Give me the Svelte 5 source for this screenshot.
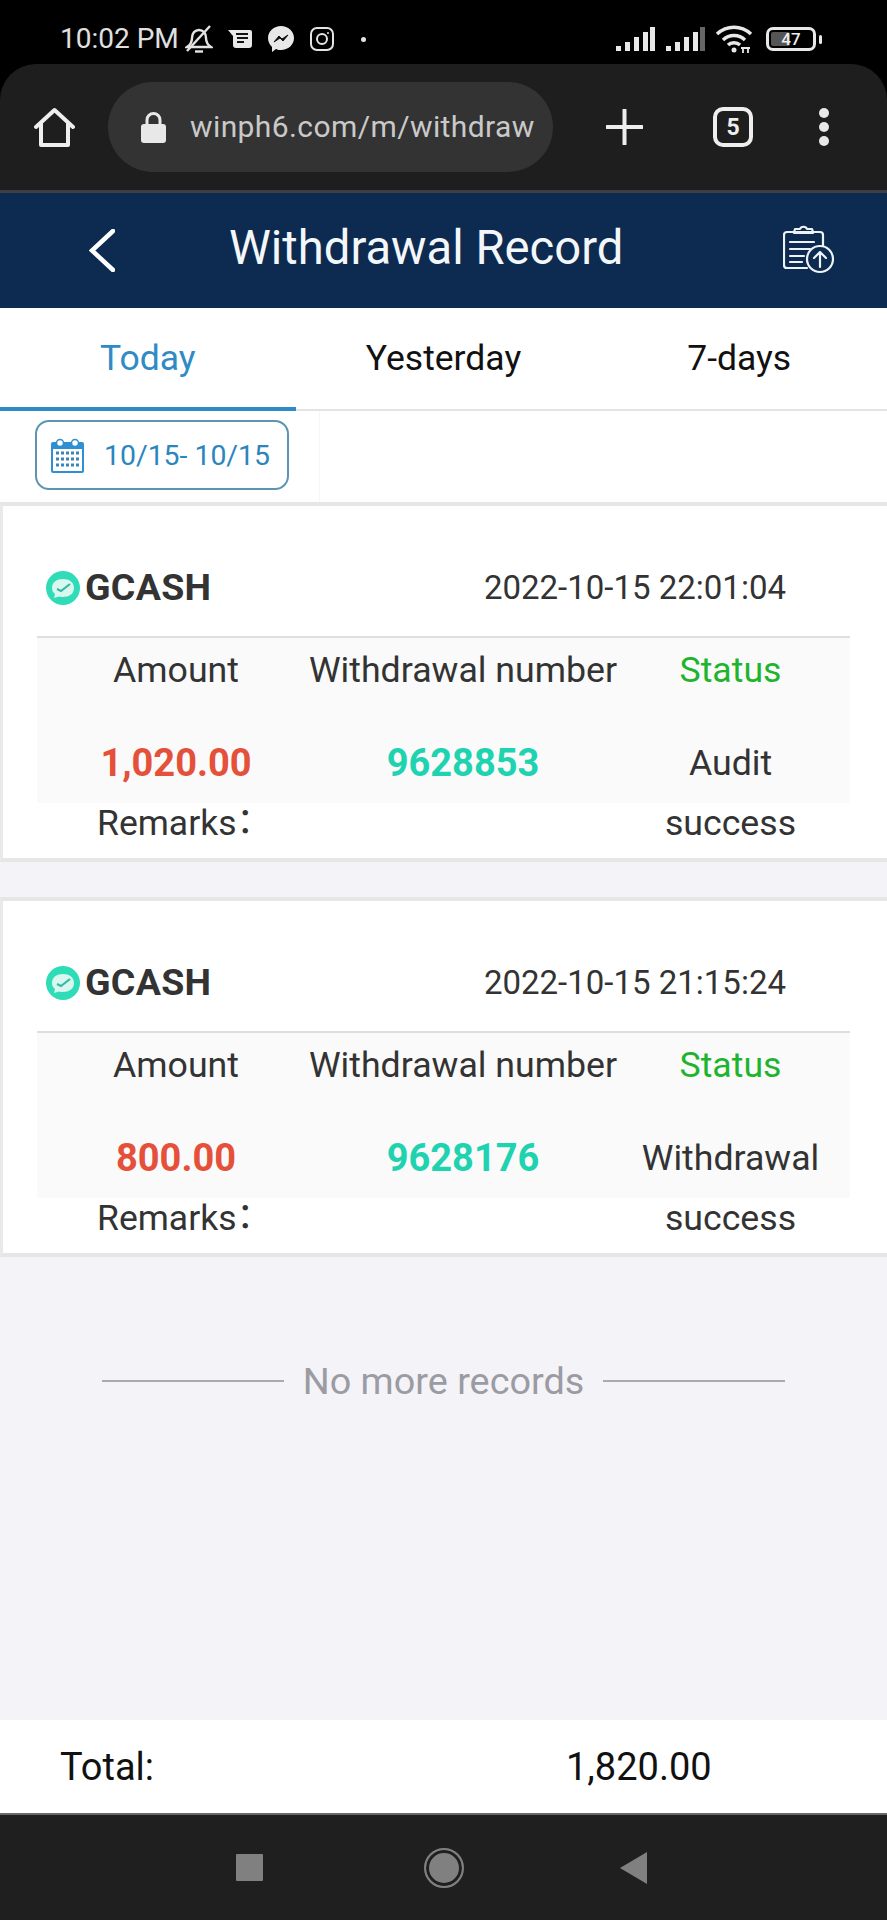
<script>
  const tabs = ['Today', 'Yesterday', '7-days'];
  let active = 0;

  const records = [
    { time: '2022-10-15 22:01:04', amount: '1,020.00', number: '9628853', status: ['Audit', 'success'] },
    { time: '2022-10-15 21:15:24', amount: '800.00', number: '9628176', status: ['Withdrawal', 'success'] }
  ];
</script>

<div class="page">
  <div class="statusbar">
    <span class="clock">10:02 PM</span>
    <svg class="i-bell" viewBox="0 0 28 28" fill="none" stroke="#e4e4e4" stroke-width="2.400">
      <path d="M2 22c3-2 5-4 5-9 0-5 3-8 7-8s7 3 7 8c0 5 2 7 5 9z" />
      <path d="M10 26.500h8" />
      <path d="M2 26L25 1" />
    </svg>
    <svg class="i-msg" viewBox="0 0 24 20">
      <path d="M0 1h22a2 2 0 0 1 2 2v13a3 3 0 0 1-3 3H8a3 3 0 0 1-3-3V7z" fill="#e8e8e8" />
      <path d="M8 5h12M9 9h11M9 13h7" stroke="#111" stroke-width="2" />
    </svg>
    <svg class="i-fb" viewBox="0 0 26 26">
      <path d="M13 0C6 0 0 5 0 12c0 4 2 7 4 9v5l4-3c2 1 3 1 5 1 7 0 13-5 13-12S20 0 13 0z" fill="#e8e8e8" />
      <path d="M6 16l5-6 3 3 6-4-5 6-3-3z" fill="#111" stroke="#111" />
    </svg>
    <svg class="i-ig" viewBox="0 0 24 24" fill="none" stroke="#e4e4e4" stroke-width="2">
      <rect x="1" y="1" width="22" height="22" rx="6" />
      <circle cx="12" cy="12" r="5" />
      <circle cx="18" cy="6" r="1" fill="#e4e4e4" stroke="none" />
    </svg>
    <span class="dot"></span>
    <span class="grow"></span>
    <svg class="i-signal" viewBox="0 0 39 24" fill="#e8e8e8">
      <rect x="0" y="19" width="5" height="5" /><rect x="9" y="15" width="5" height="9" /><rect x="18" y="10" width="5" height="14" /><rect x="27" y="5" width="5" height="19" /><rect x="34" y="0" width="5" height="24" />
    </svg>
    <svg class="i-signal s2" viewBox="0 0 39 24" fill="#e8e8e8">
      <rect x="0" y="19" width="5" height="5" /><rect x="9" y="15" width="5" height="9" /><rect x="18" y="10" width="5" height="14" /><rect x="27" y="5" width="5" height="19" /><rect x="34" y="0" width="5" height="24" fill="#666" />
    </svg>
    <svg class="i-wifi" viewBox="0 0 38 28" fill="none" stroke="#e8e8e8" stroke-width="3.400">
      <path d="M2 9c10-9 24-9 34 0" />
      <path d="M8 15c6-6 16-6 22 0" />
      <path d="M13 20c3-3 9-3 12 0" />
      <circle cx="19" cy="25" r="2.500" fill="#e8e8e8" stroke="none" />
      <path d="M28 22v6M33 22v6M26 23h9" stroke-width="1.800" />
    </svg>
    <div class="battery"><span class="level"></span><span class="pct">47</span></div>
    <span class="nub"></span>
  </div>

  <div class="chrome">
    <svg class="i-home" viewBox="0 0 41 40" fill="none" stroke="#eee" stroke-width="4" stroke-linejoin="round">
      <path d="M2 20L20.500 3 39 20" stroke-linecap="round" />
      <path d="M7 16v22h27V16" />
    </svg>
    <div class="urlbar">
      <svg class="i-lock" viewBox="0 0 25 31">
        <path d="M6 13V8a6.500 6.500 0 0 1 13 0v5" fill="none" stroke="#e8e8e8" stroke-width="3" />
        <rect x="0" y="12" width="25" height="19" rx="3" fill="#e8e8e8" />
      </svg>
      <span class="url">winph6.com/m/withdraw</span>
    </div>
    <svg class="i-plus" viewBox="0 0 37 36" stroke="#eee" stroke-width="4" stroke-linecap="round">
      <path d="M1 18h35M18.500 1v34" />
    </svg>
    <div class="tabcount">5</div>
    <div class="menu"><span></span><span></span><span></span></div>
  </div>

  <header class="title-bar">
    <svg class="i-back" viewBox="0 0 26 43" fill="none" stroke="#fff" stroke-width="4.500" stroke-linecap="round">
      <path d="M24 2L3 21.500 24 41" />
    </svg>
    <h1>Withdrawal Record</h1>
    <svg class="i-doc" viewBox="0 0 52 50" fill="none" stroke="#eef3f8" stroke-width="2.200" stroke-linecap="round" stroke-linejoin="round">
      <path d="M24 44H4a3 3 0 0 1-3-3V11a3 3 0 0 1 3-3h33a3 3 0 0 1 3 3v13" />
      <path d="M11 8l1-3h5c1-3 6-3 7 0h5l1 3 0 1H11z" />
      <path d="M7 18h24M7 25h20M7 32h14M7 38h12" />
      <circle cx="37" cy="35" r="13" fill="#0d2a50" />
      <path d="M37 43V28M31 34l6-6 6 6" />
    </svg>
  </header>

  <nav class="tabs">
    {#each tabs as tab, i}
      <button class="tab" class:active={i === active} on:click={() => (active = i)}>{tab}</button>
    {/each}
  </nav>

  <div class="date-row">
    <div class="date-cell">
      <div class="date-btn">
        <svg class="i-cal" viewBox="0 0 33 35">
          <path d="M2 4h29a2 2 0 0 1 2 2v27a2 2 0 0 1-2 2H2a2 2 0 0 1-2-2V6a2 2 0 0 1 2-2z" fill="#2f8fd0" />
          <rect x="2" y="11" width="29" height="22" fill="#fff" />
          <circle cx="9" cy="5" r="3.500" fill="#fff" stroke="#2f8fd0" stroke-width="1.500" />
          <circle cx="24" cy="5" r="3.500" fill="#fff" stroke="#2f8fd0" stroke-width="1.500" />
          <path d="M5 15h23M5 21h23M5 27h23" stroke="#3a86b8" stroke-width="3" stroke-dasharray="3 2" />
        </svg>
        <span>10/15- 10/15</span>
      </div>
    </div>
  </div>

  <main class="list">
    {#each records as r}
      <section class="card">
        <div class="card-head">
          <div class="channel">
            <svg class="i-gcash" viewBox="0 0 34 34">
              <circle cx="17" cy="17" r="17" fill="#2fdcb8" />
              <path d="M6 17c0-6 5-9 11-9s11 3 11 9-5 9-11 9c-2 0-3 0-4-.5L8 27l1-4c-2-1.500-3-3.500-3-6z" fill="#d8f7ef" />
              <path d="M11 18l4 2 9-7" fill="none" stroke="#35b9a3" stroke-width="2.200" />
            </svg>
            <b>GCASH</b>
          </div>
          <span class="time">{r.time}</span>
        </div>

        <div class="grid">
          <div class="cell">Amount</div>
          <div class="cell">Withdrawal number</div>
          <div class="cell green">Status</div>
          <div class="cell val red">{r.amount}</div>
          <div class="cell val teal">{r.number}</div>
          <div class="cell status">{r.status[0]}<br />{r.status[1]}</div>
        </div>

        <div class="remarks">Remarks：</div>
      </section>
    {/each}

    <div class="no-more">
      <span class="rule"></span>
      <span>No more records</span>
      <span class="rule"></span>
    </div>
  </main>

  <footer class="total">
    <span class="total-label">Total:</span>
    <span class="total-value">1,820.00</span>
  </footer>

  <div class="navbar">
    <span class="nav-square"></span>
    <span class="nav-circle"></span>
    <span class="nav-back"></span>
  </div>
</div>

<style>
  :global(body) {
    margin: 0;
    background: #f3f3f8;
  }

  .page {
    width: 887px;
    height: 1920px;
    display: flex;
    flex-direction: column;
    overflow: hidden;
    font-family: Roboto, 'Liberation Sans', sans-serif;
    color: #333;
    background: #f3f3f8;
  }

  /* phone status bar */
  .statusbar {
    height: 64px;
    flex: none;
    background: #000;
    display: flex;
    align-items: center;
    padding: 0 65px 0 60px;
    box-sizing: border-box;
    position: relative;
  }

  .clock {
    font-size: 28px;
    color: #e0e0e0;
    width: 125px;
    white-space: nowrap;
    margin-top: 14px;
    line-height: 24px;
  }

  .statusbar svg {
    flex: none;
    margin-top: 14px;
  }

  .i-bell { width: 28px; height: 28px; }
  .i-msg { width: 24px; height: 20px; margin-left: 15px; }
  .i-fb { width: 26px; height: 26px; margin-left: 16px; }
  .i-ig { width: 24px; height: 24px; margin-left: 16px; }

  .dot {
    width: 5px;
    height: 5px;
    border-radius: 50%;
    background: #e4e4e4;
    margin: 14px 0 0 27px;
  }

  .grow { flex: 1; }

  .i-signal { width: 39px; height: 24px; }
  .s2 { margin-left: 11px; }
  .i-wifi { width: 38px; height: 28px; margin-left: 10px; }

  .battery {
    width: 50px;
    height: 24px;
    margin: 14px 0 0 13px;
    border: 3px solid #e8e8e8;
    border-radius: 7px;
    box-sizing: border-box;
    position: relative;
    display: flex;
    align-items: center;
    justify-content: center;
  }

  .level {
    position: absolute;
    left: 2px;
    top: 2px;
    bottom: 2px;
    width: 19px;
    background: #555;
    border-radius: 2px;
  }

  .pct {
    position: relative;
    font-size: 17px;
    font-weight: 500;
    color: #eee;
    line-height: 18px;
  }

  .nub {
    width: 3px;
    height: 9px;
    margin: 14px 0 0 3px;
    border-radius: 2px;
    background: #e8e8e8;
  }

  /* browser toolbar */
  .chrome {
    height: 126px;
    flex: none;
    background: #1e1e1e;
    border-radius: 36px 36px 0 0;
    box-shadow: 0 -36px 0 0 #000;
    display: flex;
    align-items: center;
    padding: 0 0 0 34px;
    box-sizing: border-box;
  }

  .i-home { width: 41px; height: 40px; margin-top: 0; flex: none; }

  .urlbar {
    width: 445px;
    height: 90px;
    margin: -1px 0 0 33px;
    border-radius: 45px;
    background: #333333;
    display: flex;
    align-items: center;
    padding: 0 12px 0 33px;
    box-sizing: border-box;
    flex: none;
  }

  .i-lock { width: 25px; height: 31px; flex: none; margin-top: 1px; }

  .url {
    margin-left: 24px;
    font-size: 30px;
    color: #c9c9c9;
    white-space: nowrap;
    flex: 1;
    letter-spacing: 0.4px;
  }

  .i-plus { width: 37px; height: 36px; margin-left: 53px; flex: none; }

  .tabcount {
    width: 40px;
    height: 40px;
    margin-left: 70px;
    flex: none;
    border: 4px solid #eee;
    border-radius: 10px;
    box-sizing: border-box;
    color: #eee;
    font-size: 23px;
    font-weight: 700;
    display: flex;
    align-items: center;
    justify-content: center;
  }

  .menu {
    margin-left: 66px;
    display: flex;
    flex-direction: column;
    gap: 4px;
  }

  .menu span {
    width: 10px;
    height: 10px;
    border-radius: 50%;
    background: #e8e8e8;
  }

  /* page header */
  .title-bar {
    height: 118px;
    flex: none;
    background: #0d2a50;
    border-top: 3px solid #3d3f44;
    box-sizing: border-box;
    display: flex;
    align-items: center;
    padding: 0 0 0 89px;
  }

  .i-back { width: 26px; height: 43px; flex: none; margin-top: -1px; }

  h1 {
    margin: -5px 0 0 114px;
    font-size: 47.200px;
    font-weight: 400;
    color: #f4f7fa;
    white-space: nowrap;
    width: 554px;
    flex: none;
  }

  .i-doc { width: 52px; height: 50px; margin-top: -3px; flex: none; }

  /* day tabs */
  .tabs {
    height: 103px;
    flex: none;
    display: flex;
    background: #fff;
    border-bottom: 2px solid #e3e3e3;
    box-sizing: border-box;
  }

  .tab {
    flex: 1;
    height: 103px;
    padding: 0 0 4px;
    border: 0;
    background: none;
    font: inherit;
    font-size: 35.500px;
    color: #111;
    box-sizing: border-box;
  }

  .tab.active {
    color: #2f8bc6;
    padding-bottom: 0;
    border-bottom: 4px solid #2f8bc6;
  }

  .date-row {
    height: 91px;
    flex: none;
    background: #fff;
    box-sizing: border-box;
  }

  .date-cell {
    width: 320px;
    height: 91px;
    padding: 9px 0 0 35px;
    box-sizing: border-box;
    border-right: 1px solid #f7f7f7;
  }

  .date-btn {
    width: 254px;
    height: 70px;
    border: 2px solid #5b95b2;
    border-radius: 14px;
    box-sizing: border-box;
    display: flex;
    align-items: center;
    padding-left: 14px;
    font-size: 28.400px;
    color: #2a86bd;
    white-space: nowrap;
  }

  .i-cal { width: 33px; height: 35px; margin-right: 20px; flex: none; }

  /* records */
  .list {
    flex: 1;
    display: flex;
    flex-direction: column;
  }

  .card {
    height: 360px;
    flex: none;
    margin-bottom: 35px;
    background: #fff;
    border-top: 4px solid #e6e6e6;
    border-bottom: 4px solid #e6e6e6;
    border-left: 3px solid #e9e9e9;
    box-sizing: border-box;
    padding: 0 37px 0 34px;
  }

  .card-head {
    height: 132px;
    border-bottom: 2px solid #dedede;
    box-sizing: border-box;
    display: flex;
    align-items: center;
    justify-content: space-between;
    padding: 32px 0 0 9px;
  }

  .channel {
    display: flex;
    align-items: center;
    gap: 5px;
  }

  .i-gcash { width: 34px; height: 34px; margin-top: 2px; }

  .channel b {
    font-size: 37.500px;
    font-weight: 700;
    color: #333;
    letter-spacing: 0.3px;
  }

  .time {
    font-size: 33px;
    color: #333;
    margin-right: 64px;
  }

  .grid {
    display: grid;
    grid-template-columns: 278px 296px 1fr;
    grid-template-rows: 74px 91px;
    background: #fafafa;
  }

  .cell {
    font-size: 35.700px;
    display: flex;
    justify-content: center;
    line-height: 64px;
    color: #333;
    white-space: nowrap;
  }

  .green { color: #1fb42e; }

  .val {
    font-weight: 700;
    line-height: 102px;
    font-size: 38px;
  }

  .red { color: #e4503a; }
  .teal { color: #1fd3b0; }

  .status {
    display: block;
    text-align: center;
    line-height: 60px;
    padding-top: 21px;
    height: 91px;
  }

  .remarks {
    font-family: Roboto, 'Noto Sans CJK JP', sans-serif;
    font-feature-settings: 'halt';
    font-size: 35.500px;
    line-height: 40px;
    padding: 0 0 0 60px;
    color: #333;
  }

  .no-more {
    margin-top: 67px;
    display: flex;
    align-items: center;
    justify-content: center;
    gap: 19px;
    font-size: 37.800px;
    color: #9b9ba3;
  }

  .rule {
    width: 182px;
    height: 2px;
    background: #aaaaaf;
  }

  /* footer */
  .total {
    height: 93px;
    flex: none;
    background: #fff;
    display: flex;
    align-items: center;
    font-size: 38px;
    color: #111;
    box-sizing: border-box;
    padding: 0 0 0 60px;
  }

  .total-value { margin-left: 414px; }
  .total-label { width: 92px; }

  .navbar {
    height: 107px;
    flex: none;
    background: #1f1f1f;
    border-top: 2px solid #6a6a6a;
    box-sizing: border-box;
    display: flex;
    align-items: center;
    padding-left: 236px;
  }

  .nav-square {
    width: 27px;
    height: 27px;
    background: #808080;
    border-radius: 1px;
  }

  .nav-circle {
    width: 40px;
    height: 40px;
    margin-left: 161px;
    border-radius: 50%;
    box-sizing: border-box;
    border: 2px solid #808080;
    background: #808080;
    box-shadow: inset 0 0 0 3px #1f1f1f;
  }

  .nav-back {
    margin-left: 156px;
    width: 0;
    height: 0;
    border-style: solid;
    border-width: 16px 27px 16px 0;
    border-color: transparent #808080 transparent transparent;
  }
</style>
